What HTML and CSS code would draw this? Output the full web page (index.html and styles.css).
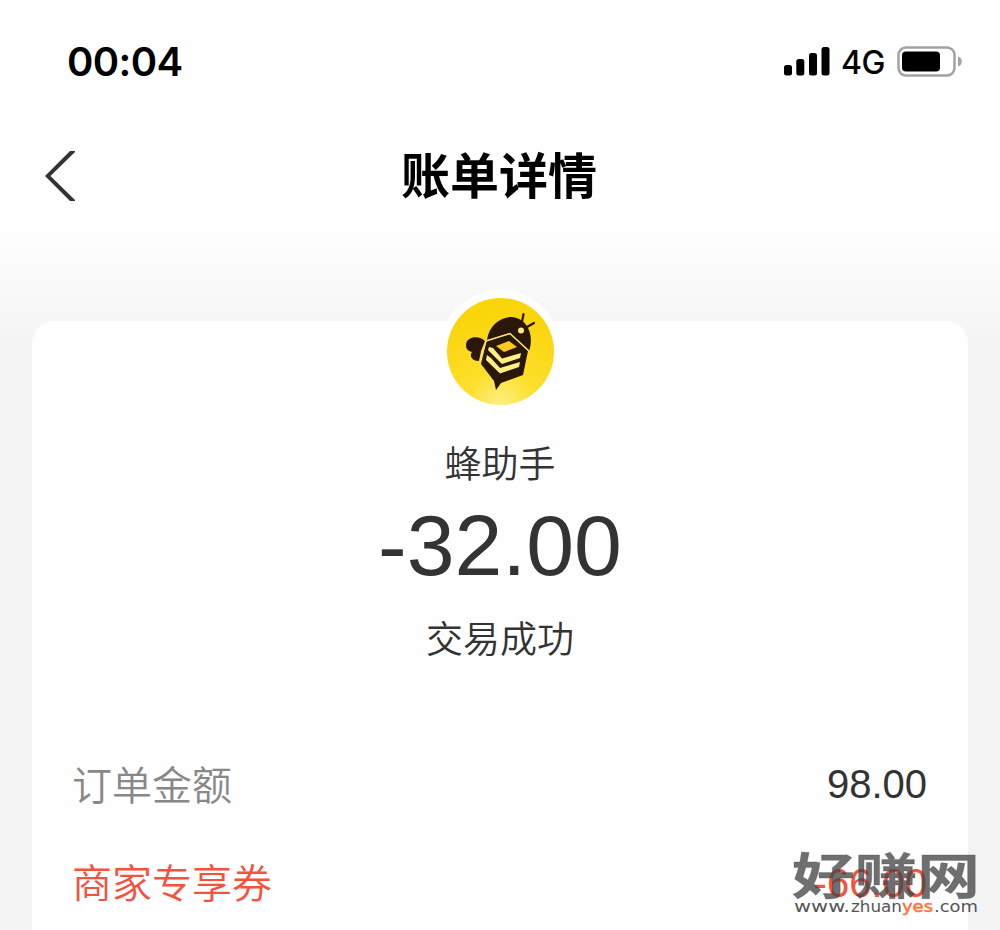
FILE: index.html
```html
<!DOCTYPE html>
<html lang="zh-CN">
<head>
<meta charset="utf-8">
<title>账单详情</title>
<link rel="stylesheet" href="styles.css">
</head>
<body>
<header class="status">
  <span class="time">00:04</span>
  <div class="indicators">
    <svg class="signal" width="46" height="29" viewBox="0 0 46 29"><rect y="18" width="8" height="10.500" rx="2.500"/><rect x="12.300" y="12" width="8" height="16.500" rx="2.500"/><rect x="25" y="6" width="8" height="22.500" rx="2.500"/><rect x="37.500" width="8" height="28.500" rx="2.500"/></svg>
    <span class="network">4G</span>
    <svg class="battery" width="66" height="31" viewBox="0 0 66 31"><rect x="1.500" y="1.500" width="56" height="28" rx="7.500" fill="none" stroke="#a2a2a2" stroke-width="2.500"/><rect x="5" y="5.500" width="38" height="20" rx="4"/><path d="M61 10.500c5 1 5 9 0 10z" fill="#a2a2a2"/></svg>
  </div>
</header>
<nav class="nav">
  <svg class="back" width="34" height="52" viewBox="0 0 34 52"><path d="M32 2H27L2 27L27 52H32L32 51L7.500 27L32 3Z" fill="#333"/></svg>
  <h1 class="title">账单详情</h1>
</nav>
<main class="card">
  <div class="avatar">
    <svg width="107" height="107" viewBox="0 0 107 107">
      <defs><radialGradient id="gold" cx=".5" cy="1" r=".85"><stop offset="0" stop-color="#ffef87"/><stop offset=".38" stop-color="#fddf2c"/><stop offset="1" stop-color="#fbd50c"/></radialGradient></defs>
      <circle cx="53.500" cy="53.500" r="53.500" fill="url(#gold)"/>
      <g fill="#2b1708">
        <path d="M40 42C42 27 54 19 65 19C77 20 87 32 83 50L82 53L63 35Z"/>
        <path d="M75 24L76.500 16M80 29L87 25" fill="none" stroke="#2b1708" stroke-width="2.200" stroke-linecap="round"/>
        <path d="M38 43C33 37 19 38 19 47C19 51 21 53 25 54C22 58 25 63 32 63L34 53Z"/>
        <path d="M39.500 43L63 36L81 53L76 77L54 85L49 92L47 83L34 66Z"/>
      </g>
      <circle cx="74" cy="32.500" r="3" fill="#ffe978"/>
      <path d="M33 63L39 43L63 35.500L82 53" fill="none" stroke="#f5e27b" stroke-width="1.500"/>
      <path d="M49 48L62 43L70 49L57 54Z" fill="#fcc91d"/>
      <g fill="#fff081">
        <path d="M42 49L46 50L55 60.500L74 55L73 60L55 66L41 52Z"/>
        <path d="M40 57L44 60L53 70L73 64L72 69L53 75.500L39 62Z"/>
      </g>
    </svg>
  </div>
  <div class="merchant">蜂助手</div>
  <div class="amount">-32.00</div>
  <div class="state">交易成功</div>
  <div class="details">
    <div class="row"><span class="label">订单金额</span><span class="value">98.00</span></div>
    <div class="row discount"><span class="label">商家专享券</span><span class="value">-66.00</span></div>
  </div>
</main>
<svg class="watermark" width="190" height="72" viewBox="0 0 190 72">
  <text class="brand" x="2" y="47.500" textLength="188" lengthAdjust="spacingAndGlyphs">好赚网</text>
  <g class="site">
    <text x="4" y="65.500" textLength="56" lengthAdjust="spacingAndGlyphs">www.</text>
    <text x="61" y="65.500" textLength="51" lengthAdjust="spacingAndGlyphs">zhuan</text>
    <text class="accent" x="112" y="65.500" textLength="31" lengthAdjust="spacingAndGlyphs">yes</text>
    <text x="144" y="65.500" textLength="44" lengthAdjust="spacingAndGlyphs">.com</text>
  </g>
</svg>
</body>
</html>
```
FILE: styles.css
```css
* { box-sizing: border-box; }
body {
  margin: 0;
  height: 930px;
  overflow: hidden;
  position: relative;
  background: linear-gradient(#fefefe 0, #fefefe 230px, #f3f3f3 355px, #f3f3f3 100%);
  color: #333;
  font-family: "Liberation Sans", "Noto Sans CJK SC", sans-serif;
}
.status {
  height: 122px;
  padding: 0 37px 0 67px;
  display: flex;
  align-items: center;
  justify-content: space-between;
  color: #000;
  font-family: Inter, sans-serif;
}
.time { font-size: 40px; font-weight: 600; letter-spacing: -.6px; }
.indicators { display: flex; align-items: center; }
.network { width: 45px; margin: 2px 11px 0 11px; font-size: 32px; font-weight: 450; letter-spacing: -.5px; }
.nav {
  height: 104px;
  padding: 2px 43px 0;
  display: grid;
  grid-template-columns: 34px 1fr 34px;
  align-items: center;
}
.title {
  margin: -4px 2px 0 0;
  text-align: center;
  font-family: "Noto Sans CJK SC", sans-serif;
  font-size: 49px;
  font-weight: 700;
  line-height: 72px;
  color: #000;
}
.card {
  margin: 95px 32px 0;
  height: 609px;
  padding: 0 41px;
  display: flex;
  flex-direction: column;
  align-items: center;
  border-radius: 22px 22px 0 0;
  background: #fefefe;
}
.avatar {
  flex: none;
  width: 123px;
  height: 123px;
  margin-top: -31px;
  padding: 8px;
  border-radius: 50%;
  background: #fefefe;
}
.avatar svg { display: block; }
.merchant, .state { font-family: "Noto Sans CJK SC", sans-serif; font-size: 37px; font-weight: 350; line-height: 54px; }
.merchant { margin-top: 22px; }
.amount { height: 96px; margin-top: 8px; font-size: 86px; line-height: 97px; }
.state { margin-top: 17px; }
.details { width: 100%; margin-top: 71px; }
.row { height: 98px; display: flex; align-items: center; justify-content: space-between; }
.label { margin: -3px 0 0 -1px; font-family: "Noto Sans CJK SC", sans-serif; font-size: 40px; font-weight: 350; line-height: 58px; color: #888; }
.value { font-size: 40px; }
.discount, .discount .label { color: #f5523d; }
.discount .value { padding-top: 2px; }
.watermark { position: absolute; left: 790px; top: 846px; }
.brand { font: 700 49px "Noto Sans CJK SC", sans-serif; fill: #444; fill-opacity: .77; stroke: #444; stroke-opacity: .3; stroke-width: .8px; stroke-linejoin: round; }
.site { font: 15px "DejaVu Sans", sans-serif; fill: #555; }
.accent { fill: #ff743f; stroke: #ff743f; stroke-width: .5px; }
```
